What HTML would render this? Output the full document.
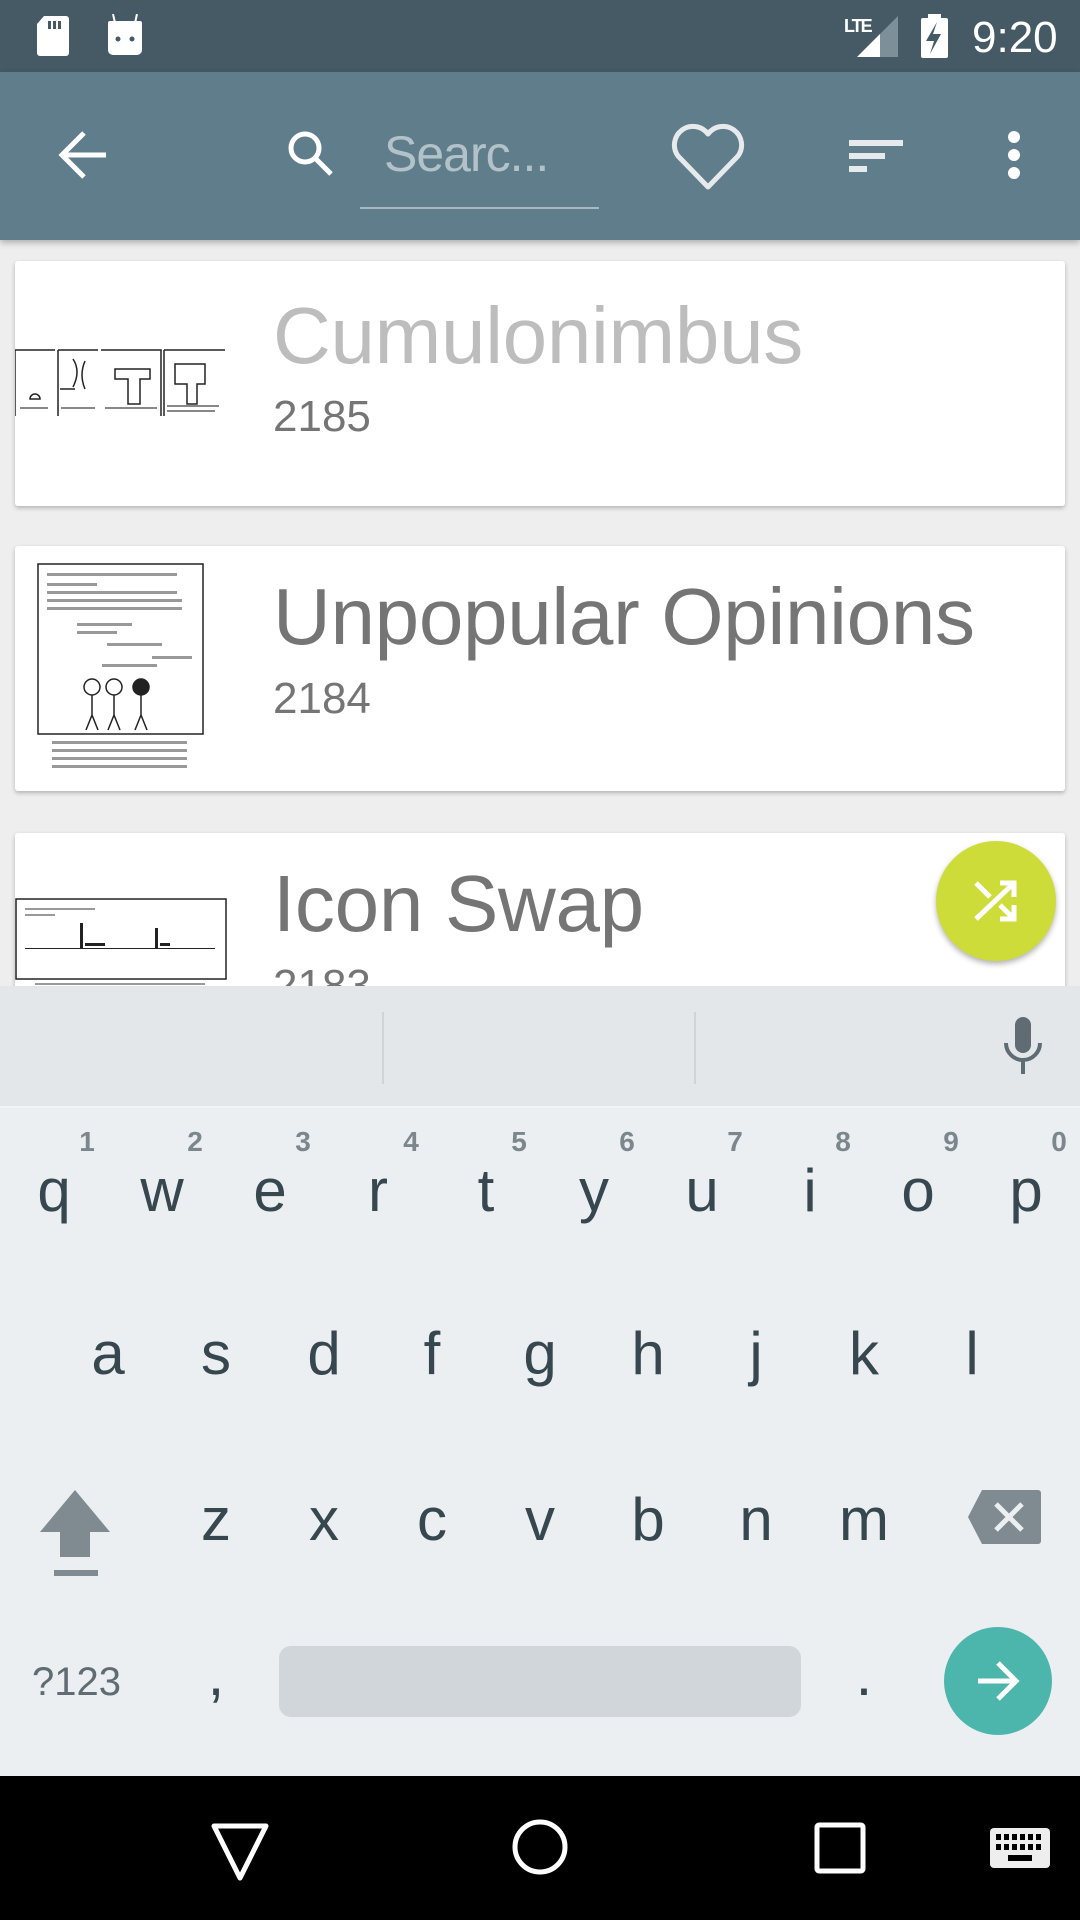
<!DOCTYPE html>
<html><head><meta charset="utf-8"><style>
*{margin:0;padding:0;box-sizing:border-box}
body{width:1080px;height:1920px;overflow:hidden;background:#eeeeee;font-family:"Liberation Sans",sans-serif;position:relative}
.abs{position:absolute}
.card{position:absolute;left:15px;width:1050px;height:245px;background:#fff;border-radius:3px;box-shadow:0 2px 4px rgba(0,0,0,.25)}
.title{position:absolute;left:258px;font-size:80px;letter-spacing:-0.3px;white-space:nowrap}
.num{position:absolute;left:258px;font-size:44px;color:#757575}
.k{position:absolute;width:108px;text-align:center;font-size:60px;color:#37474f}
.h{position:absolute;width:40px;text-align:center;font-size:28px;font-weight:bold;color:#7b868d}
</style></head><body>
<div class="abs" style="left:0;top:0;width:1080px;height:72px;background:#455a64"></div>
<svg class="abs" style="left:36px;top:14px" width="110" height="44">
<path d="M8 2h22a3 3 0 0 1 3 3v34a3 3 0 0 1-3 3H4a3 3 0 0 1-3-3V10z" fill="#fff"/>
<rect x="12" y="7" width="3" height="8" fill="#455a64"/><rect x="17" y="7" width="3" height="8" fill="#455a64"/><rect x="22" y="7" width="3" height="8" fill="#455a64"/>
<path d="M72 10h34v26a5 5 0 0 1-5 5H77a5 5 0 0 1-5-5z" fill="#fff"/><rect x="72" y="7" width="34" height="6" rx="2" fill="#fff"/>
<line x1="77" y1="0" x2="79" y2="9" stroke="#fff" stroke-width="2"/><line x1="101" y1="0" x2="99" y2="9" stroke="#fff" stroke-width="2"/>
<circle cx="82" cy="25" r="2.5" fill="#455a64"/><circle cx="96" cy="25" r="2.5" fill="#455a64"/>
</svg>
<svg class="abs" style="left:842px;top:12px" width="120" height="48">
<text x="2" y="20" font-size="18" font-weight="bold" fill="#fff" font-family="Liberation Sans" style="letter-spacing:-2px">LTE</text>
<polygon points="15,45 56,45 56,4" fill="#7d8f99"/><polygon points="15,45 38,45 38,22" fill="#fff"/>
<rect x="79" y="6" width="27" height="40" rx="2" fill="#fff"/><rect x="86" y="2" width="13" height="6" fill="#fff"/>
<polygon points="95,10 84,29 92,29 88,42 99,22 91,22" fill="#455a64"/>
</svg>
<div class="abs" style="left:972px;top:13px;font-size:44px;color:#fff">9:20</div>
<div class="abs" style="left:0;top:72px;width:1080px;height:168px;background:#607d8b;box-shadow:0 3px 6px rgba(0,0,0,.25)"></div>
<svg class="abs" style="left:0;top:72px" width="1080" height="168">
<g stroke="#fff" stroke-width="5" fill="none">
<path d="M106 83H62M84 61L62 83L84 105"/>
<circle cx="305" cy="76" r="14"/><path d="M315 86l16 16"/>
</g>
<path d="M708 115 L678 84 A15 15 0 0 1 708 62 A15 15 0 0 1 738 84 Z" fill="none" stroke="#e6eaec" stroke-width="5" stroke-linejoin="round"/>
<rect x="849" y="68" width="54" height="6" fill="#e6eaec"/><rect x="849" y="81" width="36" height="6" fill="#e6eaec"/><rect x="849" y="94" width="18" height="6" fill="#e6eaec"/>
<circle cx="1014" cy="65" r="6" fill="#fff"/><circle cx="1014" cy="83" r="6" fill="#fff"/><circle cx="1014" cy="101" r="6" fill="#fff"/>
<rect x="360" y="135" width="239" height="2" fill="#a8b8c0"/>
</svg>
<div class="abs" style="left:384px;top:125px;font-size:50px;color:#b3c2c9;letter-spacing:-1px">Searc...</div>
<div class="card" style="top:261px">
 <svg class="abs" style="left:0;top:88px" width="210" height="70">
  <g fill="none" stroke="#222" stroke-width="1.5">
  <path d="M0 1h40M43 1h40M0 1v66M43 1v66M86 1h60v66M86 1M149 1h61M149 1v66"/>
  <path d="M45 40l15 0M58 10q8 12 0 28M70 12q-6 14 0 28M100 20h35v10h-10v25h-12v-25h-13zM160 15h30v20h-8v20h-10v-20h-12z"/>
  <path d="M15 50a5 5 0 0 1 10 0z"/>
  </g>
  <g fill="#888"><rect x="5" y="58" width="28" height="2"/><rect x="46" y="58" width="34" height="2"/><rect x="90" y="58" width="52" height="2"/><rect x="152" y="56" width="52" height="2"/><rect x="152" y="61" width="48" height="2"/></g>
 </svg>
 <div class="title" style="top:29px;color:#bdbdbd">Cumulonimbus</div>
 <div class="num" style="top:131px">2185</div>
</div>
<div class="card" style="top:546px">
 <svg class="abs" style="left:22px;top:17px" width="168" height="210">
  <rect x="1" y="1" width="165" height="170" fill="none" stroke="#222" stroke-width="1.5"/>
  <g fill="#999">
   <rect x="10" y="10" width="130" height="3"/><rect x="10" y="20" width="50" height="3"/><rect x="10" y="28" width="130" height="3"/><rect x="10" y="36" width="135" height="3"/><rect x="10" y="44" width="135" height="3"/>
   <rect x="40" y="60" width="55" height="3"/><rect x="40" y="68" width="40" height="3"/><rect x="70" y="80" width="55" height="3"/><rect x="115" y="93" width="40" height="3"/><rect x="65" y="101" width="55" height="3"/>
   <rect x="15" y="178" width="135" height="3"/><rect x="15" y="186" width="135" height="3"/><rect x="15" y="194" width="135" height="3"/><rect x="15" y="202" width="135" height="3"/>
  </g>
  <g fill="none" stroke="#222" stroke-width="1.5">
   <circle cx="55" cy="124" r="8"/><circle cx="77" cy="124" r="8"/><circle cx="104" cy="124" r="8" fill="#222"/>
   <path d="M55 132v20l-6 15M55 152l6 15M77 132v20l-6 15M77 152l6 15M104 132v20l-6 15M104 152l6 15"/>
  </g>
 </svg>
 <div class="title" style="top:25px;color:#757575">Unpopular Opinions</div>
 <div class="num" style="top:128px">2184</div>
</div>
<div class="card" style="top:833px">
 <svg class="abs" style="left:0;top:65px" width="215" height="90">
  <rect x="1" y="1" width="210" height="80" fill="none" stroke="#222" stroke-width="1.5"/>
  <g fill="#999"><rect x="10" y="10" width="70" height="2"/><rect x="10" y="16" width="30" height="2"/><rect x="20" y="85" width="170" height="2"/></g>
  <rect x="10" y="50" width="190" height="1" fill="#222"/>
  <g fill="#222"><rect x="65" y="25" width="3" height="25"/><rect x="70" y="45" width="20" height="3"/><rect x="140" y="30" width="3" height="20"/><rect x="145" y="45" width="10" height="3"/></g>
 </svg>
 <div class="title" style="top:25px;color:#757575">Icon Swap</div>
 <div class="num" style="top:128px">2183</div>
</div>
<div class="abs" style="left:936px;top:841px;width:120px;height:120px;border-radius:50%;background:#cddc39;box-shadow:0 3px 6px rgba(0,0,0,.3)"></div>
<svg class="abs" style="left:966px;top:871px" width="60" height="60"><g stroke="#fff" stroke-width="5" fill="none"><path d="M10 12l14 14M34 34l14 14M10 48L48 12M34 12h14v14M48 34v14H34"/></g></svg>
<div class="abs" style="left:0;top:986px;width:1080px;height:120px;background:#e4e7e9"></div>
<div class="abs" style="left:0;top:1106px;width:1080px;height:670px;background:#eceff1;border-top:2px solid #f2f4f5"></div>
<div class="abs" style="left:382px;top:1012px;width:2px;height:72px;background:#cfd4d7"></div>
<div class="abs" style="left:694px;top:1012px;width:2px;height:72px;background:#cfd4d7"></div>
<svg class="abs" style="left:1000px;top:1015px" width="50" height="60"><rect x="15" y="2" width="16" height="36" rx="8" fill="#5f6c73"/><path d="M6 28a17 17 0 0 0 34 0M23 45v14" stroke="#5f6c73" stroke-width="4" fill="none"/></svg>
<div class="h" style="left:67px;top:1126px">1</div><div class="h" style="left:175px;top:1126px">2</div><div class="h" style="left:283px;top:1126px">3</div><div class="h" style="left:391px;top:1126px">4</div><div class="h" style="left:499px;top:1126px">5</div><div class="h" style="left:607px;top:1126px">6</div><div class="h" style="left:715px;top:1126px">7</div><div class="h" style="left:823px;top:1126px">8</div><div class="h" style="left:931px;top:1126px">9</div><div class="h" style="left:1039px;top:1126px">0</div>
<div class="k" style="left:0;top:1156px">q</div><div class="k" style="left:108px;top:1156px">w</div><div class="k" style="left:216px;top:1156px">e</div><div class="k" style="left:324px;top:1156px">r</div><div class="k" style="left:432px;top:1156px">t</div><div class="k" style="left:540px;top:1156px">y</div><div class="k" style="left:648px;top:1156px">u</div><div class="k" style="left:756px;top:1156px">i</div><div class="k" style="left:864px;top:1156px">o</div><div class="k" style="left:972px;top:1156px">p</div>
<div class="k" style="left:54px;top:1319px">a</div><div class="k" style="left:162px;top:1319px">s</div><div class="k" style="left:270px;top:1319px">d</div><div class="k" style="left:378px;top:1319px">f</div><div class="k" style="left:486px;top:1319px">g</div><div class="k" style="left:594px;top:1319px">h</div><div class="k" style="left:702px;top:1319px">j</div><div class="k" style="left:810px;top:1319px">k</div><div class="k" style="left:918px;top:1319px">l</div>
<div class="k" style="left:162px;top:1485px">z</div><div class="k" style="left:270px;top:1485px">x</div><div class="k" style="left:378px;top:1485px">c</div><div class="k" style="left:486px;top:1485px">v</div><div class="k" style="left:594px;top:1485px">b</div><div class="k" style="left:702px;top:1485px">n</div><div class="k" style="left:810px;top:1485px">m</div>
<svg class="abs" style="left:38px;top:1488px" width="74" height="90"><polygon points="37,2 72,44 52,44 52,69 22,69 22,44 2,44" fill="#7f8b91"/><rect x="16" y="82" width="44" height="6" fill="#7f8b91"/></svg>
<svg class="abs" style="left:966px;top:1488px" width="76" height="58"><path d="M16 2h56a3 3 0 0 1 3 3v48a3 3 0 0 1-3 3H16L2 29z" fill="#7f8b91"/><path d="M30 16l26 26M56 16L30 42" stroke="#eceff1" stroke-width="5"/></svg>
<div class="abs" style="left:32px;top:1660px;font-size:40px;color:#5f6c73">?123</div>
<div class="k" style="left:162px;top:1640px">,</div>
<div class="abs" style="left:279px;top:1646px;width:522px;height:71px;border-radius:12px;background:#d0d6da"></div>
<div class="k" style="left:810px;top:1640px">.</div>
<div class="abs" style="left:944px;top:1627px;width:108px;height:108px;border-radius:50%;background:#4db6ac"></div>
<svg class="abs" style="left:970px;top:1653px" width="56" height="56"><path d="M8 28h38M28 10l18 18-18 18" stroke="#fff" stroke-width="5" fill="none"/></svg>
<div class="abs" style="left:0;top:1776px;width:1080px;height:144px;background:#000"></div>
<svg class="abs" style="left:0;top:1776px" width="1080" height="144">
<polygon points="214,50 266,50 240,102" fill="none" stroke="#fff" stroke-width="5" stroke-linejoin="round"/>
<circle cx="540" cy="71" r="25" fill="none" stroke="#fff" stroke-width="5"/>
<rect x="817" y="49" width="46" height="46" rx="2" fill="none" stroke="#fff" stroke-width="5"/>
<rect x="990" y="52" width="60" height="40" rx="4" fill="#eee"/>
<g fill="#000"><rect x="996" y="58" width="5" height="6"/><rect x="1004" y="58" width="5" height="6"/><rect x="1012" y="58" width="5" height="6"/><rect x="1020" y="58" width="5" height="6"/><rect x="1028" y="58" width="5" height="6"/><rect x="1036" y="58" width="5" height="6"/>
<rect x="996" y="68" width="5" height="6"/><rect x="1004" y="68" width="5" height="6"/><rect x="1012" y="68" width="5" height="6"/><rect x="1020" y="68" width="5" height="6"/><rect x="1028" y="68" width="5" height="6"/><rect x="1036" y="68" width="5" height="6"/>
<rect x="1008" y="79" width="24" height="6"/></g>
</svg>
</body></html>
